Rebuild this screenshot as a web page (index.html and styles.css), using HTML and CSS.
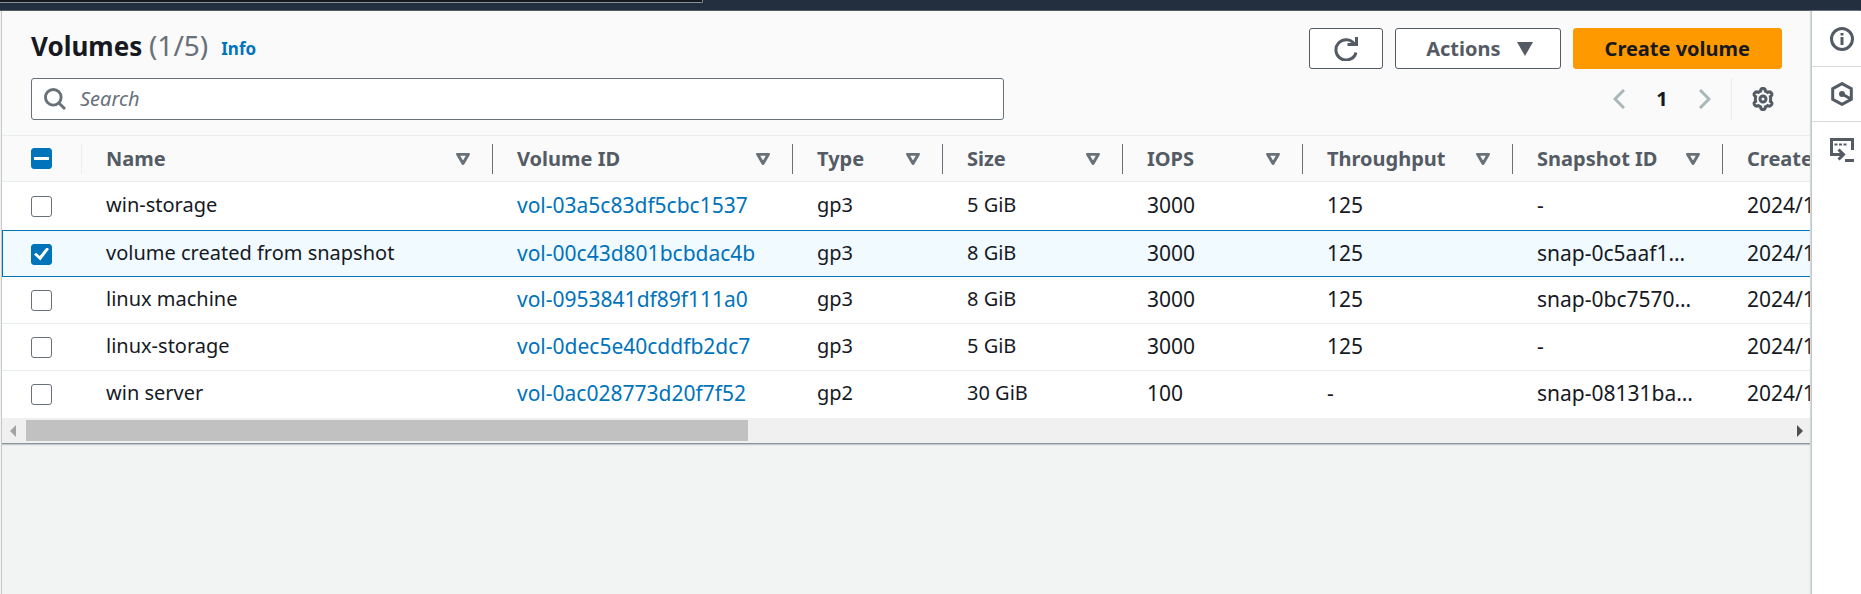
FILE: index.html
```html
<!DOCTYPE html>
<html lang="en">
<head>
<meta charset="utf-8">
<title>Volumes</title>
<link rel="stylesheet" href="styles.css">
</head>
<body>
<div class="topbar"><div class="topbar-field"></div></div>
<div class="shell">
  <main class="content">
    <section class="panel">
      <header class="panel-header">
        <div class="title-row">
          <h1 class="title">Volumes <span class="count">(1/5)</span></h1>
          <a class="info" href="#">Info</a>
          <div class="actions">
            <button class="btn btn-icon" type="button" aria-label="Refresh">
              <svg class="icon" viewBox="0 0 24 24"><path d="M22 15.500A10.200 10.200 0 1 1 20.500 7"/><path d="M22.500 0v7.500H13.500"/></svg>
            </button>
            <button class="btn btn-menu" type="button">Actions <svg class="caret" viewBox="0 0 16 14"><path d="M0 0h16L8 14z"/></svg></button>
            <button class="btn btn-primary" type="button">Create volume</button>
          </div>
        </div>
        <div class="filter-row">
          <div class="search">
            <svg class="search-icon" viewBox="0.5 0.5 22.5 22.5"><circle cx="10" cy="10" r="8"/><path d="M15.500 15.500L22 22"/></svg>
            <input class="search-input" type="text" placeholder="Search" aria-label="Search">
          </div>
          <nav class="pager" aria-label="Pagination">
            <button class="pager-btn" type="button" aria-label="Previous page"><svg class="chev" viewBox="0 0 12 20"><path d="M11 1L2 10l9 9"/></svg></button>
            <button class="pager-page" type="button">1</button>
            <button class="pager-btn" type="button" aria-label="Next page"><svg class="chev" viewBox="0 0 12 20"><path d="M1 1l9 9-9 9"/></svg></button>
            <button class="settings" type="button" aria-label="Preferences">
              <svg class="icon" viewBox="0 0 24 24"><path d="M9.6 4.2Q9.6 1.4 12 1.4T14.4 4.2Q15.6 4.6 16.6 5.4Q19.3 4.1 20.5 6.2T19.4 9.6Q19.9 12 19.4 14.4Q21.8 15.7 20.5 17.8T16.6 18.6Q15.6 19.4 14.4 19.8Q14.4 22.6 12 22.6T9.6 19.8Q8.4 19.4 7.4 18.6Q4.7 19.9 3.5 17.8T4.6 14.4Q4.1 12 4.6 9.6Q2.2 8.3 3.5 6.2T7.4 5.4Q8.4 4.6 9.6 4.2z"/><circle cx="12" cy="12" r="3"/></svg>
            </button>
          </nav>
        </div>
      </header>
      <div class="table-wrap">
        <table class="table">
          <colgroup><col class="c-check"><col class="c-name"><col class="c-id"><col class="c-type"><col class="c-mid"><col class="c-mid"><col class="c-wide"><col class="c-wide"><col class="c-wide"></colgroup>
          <thead>
            <tr>
              <th class="check-cell"><div class="head faint"><input class="tick some" type="checkbox" aria-label="Select all"></div></th>
              <th><div class="head">Name <svg class="sort" viewBox="0 0 14 12"><path d="M1.6 1.2h10.8L7 10.4z"/></svg></div></th>
              <th><div class="head">Volume ID <svg class="sort" viewBox="0 0 14 12"><path d="M1.6 1.2h10.8L7 10.4z"/></svg></div></th>
              <th><div class="head">Type <svg class="sort" viewBox="0 0 14 12"><path d="M1.6 1.2h10.8L7 10.4z"/></svg></div></th>
              <th><div class="head">Size <svg class="sort" viewBox="0 0 14 12"><path d="M1.6 1.2h10.8L7 10.4z"/></svg></div></th>
              <th><div class="head">IOPS <svg class="sort" viewBox="0 0 14 12"><path d="M1.6 1.2h10.8L7 10.4z"/></svg></div></th>
              <th><div class="head">Throughput <svg class="sort" viewBox="0 0 14 12"><path d="M1.6 1.2h10.8L7 10.4z"/></svg></div></th>
              <th><div class="head">Snapshot ID <svg class="sort" viewBox="0 0 14 12"><path d="M1.6 1.2h10.8L7 10.4z"/></svg></div></th>
              <th><div class="head">Created</div></th>
            </tr>
          </thead>
          <tbody>
            <tr><td class="check-cell"><input class="tick" type="checkbox" aria-label="win-storage"></td><td>win-storage</td><td class="code"><a href="#">vol-03a5c83df5cbc1537</a></td><td>gp3</td><td>5 GiB</td><td class="code">3000</td><td class="code">125</td><td class="code">-</td><td class="code">2024/11</td></tr>
            <tr class="selected"><td class="check-cell"><input class="tick" type="checkbox" checked aria-label="volume created from snapshot"></td><td>volume created from snapshot</td><td class="code"><a href="#">vol-00c43d801bcbdac4b</a></td><td>gp3</td><td>8 GiB</td><td class="code">3000</td><td class="code">125</td><td class="code">snap-0c5aaf1…</td><td class="code">2024/11</td></tr>
            <tr><td class="check-cell"><input class="tick" type="checkbox" aria-label="linux machine"></td><td>linux machine</td><td class="code"><a href="#">vol-0953841df89f111a0</a></td><td>gp3</td><td>8 GiB</td><td class="code">3000</td><td class="code">125</td><td class="code">snap-0bc7570…</td><td class="code">2024/11</td></tr>
            <tr><td class="check-cell"><input class="tick" type="checkbox" aria-label="linux-storage"></td><td>linux-storage</td><td class="code"><a href="#">vol-0dec5e40cddfb2dc7</a></td><td>gp3</td><td>5 GiB</td><td class="code">3000</td><td class="code">125</td><td class="code">-</td><td class="code">2024/11</td></tr>
            <tr><td class="check-cell"><input class="tick" type="checkbox" aria-label="win server"></td><td>win server</td><td class="code"><a href="#">vol-0ac028773d20f7f52</a></td><td>gp2</td><td>30 GiB</td><td class="code">100</td><td class="code">-</td><td class="code">snap-08131ba…</td><td class="code">2024/11</td></tr>
          </tbody>
        </table>
      </div>
      <div class="scrollbar">
        <svg class="arrow arrow-off" viewBox="0 0 6 12"><path d="M6 0v12L0 6z"/></svg>
        <div class="track"><div class="thumb"></div></div>
        <svg class="arrow" viewBox="0 0 6 12"><path d="M0 0v12l6-6z"/></svg>
      </div>
    </section>
  </main>
  <aside class="rail">
    <button class="rail-btn" type="button" aria-label="Info"><svg class="icon" viewBox="0 0 24 24"><circle cx="12" cy="12" r="10.5"/><path d="M12 10v8M12 6v2.4"/></svg></button>
    <button class="rail-btn" type="button" aria-label="Diagnostics"><svg class="icon" viewBox="0 0 24 24"><path d="M12 1.6l9.3 5v10.8l-9.3 5-9.3-5V6.600z"/><path d="M12 12l9 5"/><circle class="solid" cx="12" cy="12" r="3"/></svg></button>
    <button class="rail-btn" type="button" aria-label="CloudShell"><svg class="icon" viewBox="0 0 24 24"><path d="M6 16.500H1.500v-15h21V12"/><path d="M4 16.500h9M8.500 11.500l5 5-5 5"/><path d="M15 22.500h9"/><path class="dots" d="M4.500 6.500h3M9 6.500h3M13.500 6.500h3"/></svg></button>
  </aside>
</div>
</body>
</html>
```
FILE: styles.css
```css
* { box-sizing: border-box; }

body {
  margin: 0;
  min-height: 100vh;
  display: flex;
  flex-direction: column;
  overflow: hidden;
  background: #f2f3f3;
  color: #16191f;
  font-family: "Noto Sans", "Open Sans", sans-serif;
  font-size: 20px;
  line-height: 30px;
}

button, input { font: inherit; color: inherit; }
button { border: 0; background: none; padding: 0; }
a { color: #0073bb; text-decoration: none; }

.topbar {
  height: 11px;
  background: #232f3e;
  border-bottom: 1px solid #545b64;
}
.topbar-field {
  width: 703px;
  height: 3px;
  background: #16191f;
  border: 1px solid #879596;
  border-width: 0 1px 1px 0;
  border-bottom-right-radius: 2px;
}

.shell { flex: 1; display: flex; }

.content {
  flex: 1;
  min-width: 0;
  margin-left: 1px;
  border-left: 1px solid #c3c9c9;
}

.panel { border-bottom: 1px solid #879596; box-shadow: 0 1px 1px #c3c9c9; background: #fff; }

.panel-header {
  display: grid;
  gap: 9px;
  padding: 17px 29px 15px;
  background: #fafafa;
  border-bottom: 1px solid #eaeded;
}

.title-row { display: flex; align-items: flex-start; }
.title { margin: 0; font-size: 26px; line-height: 34px; font-weight: 700; }
.count { font-size: 28px; font-weight: 400; color: #687078; }
.info { margin-left: 13px; padding-top: 6px; font-size: 17px; font-weight: 700; }
.actions { display: flex; gap: 12px; margin-left: auto; }

.btn {
  height: 41px;
  display: flex;
  align-items: center;
  gap: 16px;
  border: 1px solid #545b64;
  border-radius: 3px;
  background: #fff;
  color: #545b64;
  font-weight: 700;
}
.btn-icon { padding: 0 24px; }
.btn-menu { padding: 0 27px 0 30px; }
.btn-primary { padding: 0 31px; border-color: #ff9900; background: #ff9900; color: #16191f; }
.caret { width: 16px; height: 14px; fill: #545b64; }

.icon { width: 24px; height: 24px; display: block; fill: none; stroke: #545b64; stroke-width: 3; }

.filter-row { display: grid; grid-template-columns: 5fr 4fr; align-items: center; }
.search { position: relative; }
.search-icon {
  position: absolute;
  left: 13px;
  top: 10px;
  width: 22px;
  height: 22px;
  fill: none;
  stroke: #687078;
  stroke-width: 3;
}
.search-input {
  display: block;
  width: 100%;
  height: 42px;
  padding: 0 16px 2px 48px;
  border: 1px solid #687078;
  border-radius: 3px;
  background: #fff;
}
.search-input::placeholder { color: #687078; font-style: italic; opacity: 1; }

.pager { display: flex; align-items: center; justify-content: flex-end; }
.chev { display: block; width: 12px; height: 20px; fill: none; stroke: #aab7b8; stroke-width: 3; }
.pager-page { width: 74px; font-weight: 700; }
.settings { height: 42px; margin-left: 20px; padding: 0 7px 0 19px; border-left: 1px solid #eaeded; }

.table-wrap { overflow: hidden; }
.table { width: 100%; min-width: 1900px; table-layout: fixed; border-collapse: separate; border-spacing: 0; }
.c-check { width: 80px; }
.c-name { width: 411px; }
.c-id { width: 300px; }
.c-type { width: 150px; }
.c-mid { width: 180px; }
.c-wide { width: 210px; }

th {
  height: 46px;
  padding: 0;
  background: #fafafa;
  border-bottom: 1px solid #eaeded;
  color: #545b64;
  text-align: left;
}
.head {
  height: 30px;
  padding: 0 22px 0 24px;
  display: flex;
  align-items: center;
  justify-content: space-between;
  border-right: 1px solid #687078;
}
.head.faint { padding-left: 29px; border-color: #eaeded; }
.sort { width: 14px; height: 12px; fill: none; stroke: #687078; stroke-width: 3; stroke-linejoin: round; }

td {
  height: 47px;
  padding: 0 24px 2px;
  border-bottom: 1px solid #eaeded;
  white-space: nowrap;
}
.code { font-size: 21px; }
td.check-cell { padding: 1px 0 0 29px; }
tbody tr:first-child td { height: 48px; border-bottom-color: transparent; }
tbody tr:last-child td { border-bottom-color: transparent; }
.selected td { background: #f1faff; border-top: 1px solid #0073bb; border-bottom-color: #0073bb; }
.selected td:first-child { border-left: 1px solid #0073bb; padding-left: 28px; }

.tick {
  appearance: none;
  display: grid;
  place-items: center;
  width: 21px;
  height: 21px;
  margin: 0;
  border: 1px solid #687078;
  border-radius: 3px;
  background: #fff;
}
.tick:checked, .tick.some { border-color: #0073bb; background: #0073bb; }
.tick.some::after { content: ""; width: 15px; height: 3px; background: #fff; }
.tick:checked::after {
  content: "";
  width: 15px;
  height: 13px;
  background: #fff;
  clip-path: polygon(0 54%, 14% 40%, 38% 66%, 84% 0, 100% 12%, 42% 100%);
}

.scrollbar {
  height: 25px;
  padding: 0 8px;
  display: flex;
  align-items: center;
  gap: 10px;
  background: #f0f0f0;
}
.arrow { width: 6px; height: 12px; fill: #505050; }
.arrow-off { fill: #a3a3a3; }
.track { flex: 1; }
.thumb { width: 41%; height: 21px; background: #c1c1c1; }

.rail {
  width: 50px;
  padding-top: 1px;
  background: #fff;
  border-left: 1px solid #c3c9c9;
  box-shadow: -1px 0 1px #d5dbdb;
  position: relative;
}
.rail-btn {
  display: block;
  width: 100%;
  height: 55px;
  padding-left: 18px;
  border-bottom: 1px solid #d5dbdb;
}
.rail-btn:last-child { border-bottom: 0; }
.dots { stroke-width: 2; }
.solid { fill: #545b64; stroke: none; }
```
